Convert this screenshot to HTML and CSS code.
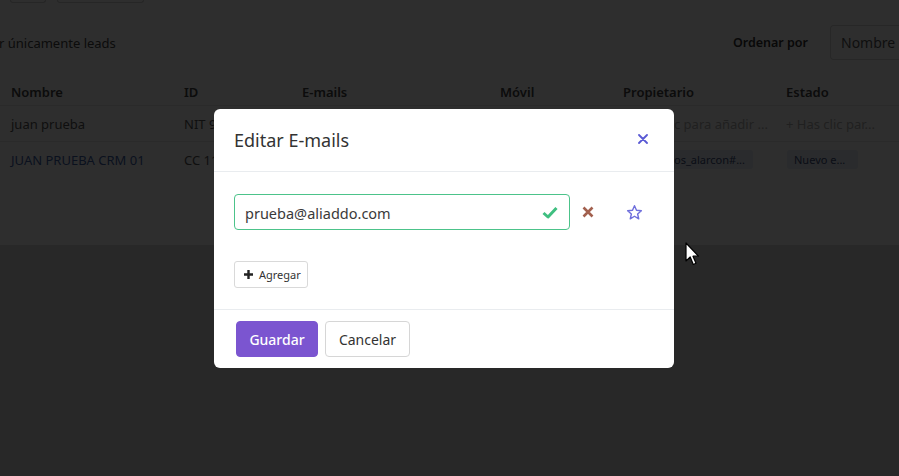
FILE: index.html
```html
<!DOCTYPE html>
<html lang="es">
<head>
<meta charset="utf-8">
<title>Editar E-mails</title>
<link rel="stylesheet" href="styles.css">
</head>
<body>
<div class="page">
  <div class="toolbar">
    <span class="tool-btn tool-a"></span>
    <span class="tool-btn tool-b"></span>
  </div>
  <div class="filters">
    <label class="only-leads">r únicamente leads</label>
    <div class="sort">
      <span class="sort-label">Ordenar por</span>
      <span class="sort-select">Nombre</span>
    </div>
  </div>
  <table class="grid">
    <thead>
      <tr>
        <th class="c1">Nombre</th>
        <th class="c2">ID</th>
        <th class="c3">E-mails</th>
        <th class="c4">Móvil</th>
        <th class="c5">Propietario</th>
        <th class="c6">Estado</th>
      </tr>
    </thead>
    <tbody>
      <tr>
        <td>juan prueba</td>
        <td>NIT 9</td>
        <td></td>
        <td></td>
        <td class="placeholder owner-ph">c para añadir ...</td>
        <td class="placeholder">+ Has clic par...</td>
      </tr>
      <tr>
        <td class="link">JUAN PRUEBA CRM 01</td>
        <td>CC 11</td>
        <td></td>
        <td></td>
        <td class="owner-cell"><span class="pill pill-owner">os_alarcon#...</span></td>
        <td><span class="pill pill-state">Nuevo e...</span></td>
      </tr>
    </tbody>
  </table>
</div>

<div class="overlay"></div>

<div class="modal">
  <div class="modal-header">
    <h2 class="modal-title">Editar E-mails</h2>
    <span class="close">
      <svg width="10" height="10" viewBox="0 0 10 10"><path d="M1 1 L9 9 M9 1 L1 9" stroke="#5959d4" stroke-width="1.8" stroke-linecap="round"/></svg>
    </span>
  </div>
  <div class="modal-body">
    <div class="email-row">
      <div class="email-input">
        <span class="email-text">prueba@aliaddo.com</span>
        <svg class="check" width="16" height="13" viewBox="0 0 16 13"><path d="M1.5 7 L6 11 L14.5 2" fill="none" stroke="#3fbf80" stroke-width="3" stroke-linejoin="round"/></svg>
      </div>
      <span class="remove">
        <svg width="12" height="12" viewBox="0 0 12 12"><path d="M1.5 1.5 L10.5 10.5 M10.5 1.5 L1.5 10.5" stroke="#a2604e" stroke-width="2.6"/></svg>
      </span>
      <span class="star">
        <svg width="17" height="17" viewBox="0 0 24 24"><path d="M12 2.5 L14.8 8.9 L21.7 9.5 L16.4 14.1 L18 20.9 L12 17.3 L6 20.9 L7.6 14.1 L2.3 9.5 L9.2 8.9 Z" fill="none" stroke="#6f6fdc" stroke-width="2" stroke-linejoin="round"/></svg>
      </span>
    </div>
    <button class="add-btn">
      <svg width="9" height="9" viewBox="0 0 9 9"><path d="M4.5 0 V9 M0 4.5 H9" stroke="#222" stroke-width="2.4"/></svg>
      <span>Agregar</span>
    </button>
  </div>
  <div class="modal-footer">
    <button class="btn btn-primary">Guardar</button>
    <button class="btn btn-default">Cancelar</button>
  </div>
</div>

<svg class="cursor" width="16" height="26" viewBox="0 0 16 26">
  <path d="M1 1 V19 L5.2 15 L8.3 22.5 L11 21.3 L8 14.2 L13.5 14.2 Z" fill="#fff" stroke="#000" stroke-width="1.2" stroke-linejoin="round"/>
</svg>
</body>
</html>
```

FILE: styles.css
```css
html, body {
  margin: 0;
  padding: 0;
  height: 100%;
  overflow: hidden;
}
body {
  background: #dcdcdc;
  font-family: "Noto Sans", "Open Sans", sans-serif;
  color: #333;
}
.page {
  background: #fff;
  height: 245px;
  overflow: hidden;
}
.toolbar {
  display: flex;
  height: 3px;
  padding-left: 10px;
  gap: 11px;
}
.tool-btn {
  display: block;
  height: 2px;
  border: 1px solid #cfcfcf;
  border-top: none;
  border-radius: 0 0 4px 4px;
}
.tool-a { width: 34px; }
.tool-b { width: 85px; }
.filters {
  display: flex;
  align-items: center;
  justify-content: space-between;
  margin-top: 22px;
  height: 35px;
}
.only-leads {
  font-size: 13px;
  color: #444;
  margin-left: -1px;
}
.sort {
  display: flex;
  align-items: center;
}
.sort-label {
  font-size: 12.5px;
  font-weight: 600;
  color: #333;
  margin-right: 22px;
}
.sort-select {
  box-sizing: border-box;
  width: 69px;
  height: 35px;
  border: 1px solid #d6d6d6;
  border-right: none;
  border-radius: 4px 0 0 4px;
  padding-left: 10px;
  font-size: 14px;
  line-height: 33px;
  color: #555;
  white-space: nowrap;
  overflow: hidden;
}
.grid {
  margin-top: 18px;
  border-collapse: collapse;
  table-layout: fixed;
  width: 960px;
  font-size: 13px;
}
.grid th, .grid td {
  text-align: left;
  padding: 0 0 0 11px;
  white-space: nowrap;
  overflow: hidden;
}
.grid th {
  height: 27px;
  font-weight: 600;
  color: #444;
  border-bottom: 1px solid #e6e6e6;
  vertical-align: middle;
}
.grid td {
  height: 35px;
  color: #555;
  border-bottom: 1px solid #e6e6e6;
}
.grid tbody tr:last-child td { border-bottom: none; }
.c1 { width: 162px; }
.c2 { width: 107px; }
.c3 { width: 187px; }
.c4 { width: 112px; }
.c5 { width: 152px; }
.grid td.placeholder { color: #b0b0b0; }
.grid td.owner-ph { padding-left: 62px; }
.grid td.link { color: #3d5fa8; }
.grid td.owner-cell { padding-left: 60px; }
.pill {
  display: inline-block;
  font-size: 11px;
  line-height: 13px;
  padding: 3px 8px;
  border-radius: 3px;
  background: #e6ecf6;
  color: #3d4f7a;
}
.pill-owner { padding-left: 2px; }
.pill-state { margin-left: 1px; padding: 3px 13px 3px 7px; }

.overlay {
  position: fixed;
  inset: 0;
  background: rgba(0, 0, 0, 0.82);
}

.modal {
  position: fixed;
  left: 214px;
  top: 109px;
  width: 460px;
  background: #fff;
  border-radius: 6px;
}
.modal-header {
  height: 63px;
  box-sizing: border-box;
  border-bottom: 1px solid #e9ecef;
  display: flex;
  align-items: center;
  justify-content: space-between;
  padding: 0 26px 0 20px;
}
.modal-title {
  margin: 0;
  font-size: 18px;
  font-weight: 400;
  color: #333;
}
.close {
  display: flex;
  margin-top: -3px;
}
.modal-body {
  padding: 22px 20px 21px 20px;
}
.email-row {
  display: flex;
  align-items: center;
}
.email-input {
  box-sizing: border-box;
  width: 336px;
  height: 36px;
  border: 1px solid #4cc38a;
  border-radius: 4px;
  display: flex;
  align-items: center;
  justify-content: space-between;
  padding: 0 11px 0 10px;
}
.email-text {
  font-size: 14.5px;
  color: #3a3a3a;
  margin-top: 1px;
}
.check { margin-top: 1px; }
.remove {
  display: flex;
  margin-left: 12px;
}
.star {
  display: flex;
  margin-left: 32px;
}
.add-btn {
  margin-top: 31px;
  box-sizing: border-box;
  width: 74px;
  height: 27px;
  border: 1px solid #d9d9d9;
  border-radius: 3px;
  background: #fff;
  display: flex;
  align-items: center;
  gap: 6px;
  padding: 0 0 0 9px;
  font-family: "Noto Sans", sans-serif;
  font-size: 11px;
  color: #333;
}
.modal-footer {
  border-top: 1px solid #e9ecef;
  padding: 11px 22px 11px 22px;
  display: flex;
  gap: 7px;
}
.btn {
  box-sizing: border-box;
  height: 36px;
  border-radius: 4px;
  font-family: "Noto Sans", sans-serif;
  font-size: 14px;
}
.btn-primary {
  width: 82px;
  background: #7b55d0;
  border: 1px solid #7b55d0;
  color: #fff;
  font-weight: 500;
}
.btn-default {
  width: 85px;
  background: #fff;
  border: 1px solid #d6d6d6;
  color: #333;
}
.cursor {
  position: fixed;
  left: 685px;
  top: 242px;
}
```
